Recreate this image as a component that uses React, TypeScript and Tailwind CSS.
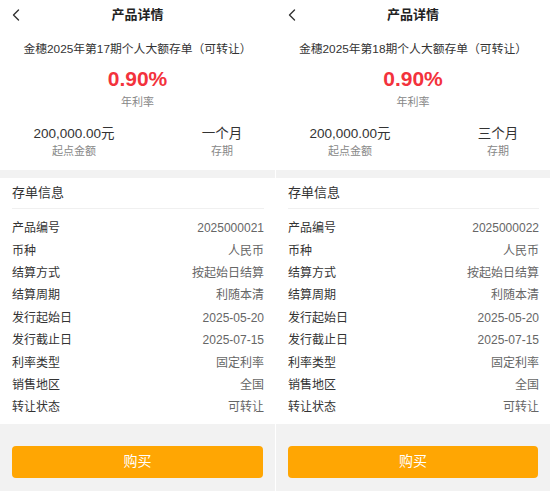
const FONT = "font-['Liberation_Sans','Noto_Sans_CJK_SC',sans-serif]";

interface Deposit {
  name: string;
  term: string;
  code: string;
}

const deposits: Deposit[] = [
  { name: "金穗2025年第17期个人大额存单（可转让）", term: "一个月", code: "2025000021" },
  { name: "金穗2025年第18期个人大额存单（可转让）", term: "三个月", code: "2025000022" },
];

function BackIcon() {
  return (
    <svg width="10" height="14" viewBox="0 0 10 14" fill="none" className="ml-3">
      <polyline points="6.5,2 1.5,7 6.5,12" stroke="#333" strokeWidth="1.4" strokeLinecap="round" strokeLinejoin="round" />
    </svg>
  );
}

function InfoRow({ label, value }: { label: string; value: string }) {
  return (
    <div className="flex h-[22.4px] items-center justify-between">
      <span className="text-[12px] text-[#333]">{label}</span>
      <span className="text-[12px] text-[#666]">{value}</span>
    </div>
  );
}

function DetailPanel({ deposit }: { deposit: Deposit }) {
  const rows = [
    ["产品编号", deposit.code],
    ["币种", "人民币"],
    ["结算方式", "按起始日结算"],
    ["结算周期", "利随本清"],
    ["发行起始日", "2025-05-20"],
    ["发行截止日", "2025-07-15"],
    ["利率类型", "固定利率"],
    ["销售地区", "全国"],
    ["转让状态", "可转让"],
  ];

  return (
    <div className="flex h-full flex-col bg-[#f2f2f2]">
      {/* Summary */}
      <div className="bg-white pb-[11px]">
        <div className="relative flex h-[30px] items-center">
          <BackIcon />
          <span className="absolute inset-x-0 text-center text-[13px] font-bold text-[#222]">产品详情</span>
        </div>
        <div className="mt-[10px] flex h-[20px] items-center justify-center whitespace-nowrap text-[11.8px] text-[#333]">
          {deposit.name}
        </div>
        <div className="mt-[5px] flex h-[28px] items-center justify-center text-[21px] font-bold text-[#f3323c]">
          0.90%
        </div>
        <div className="mt-[1px] flex h-[16px] items-center justify-center text-[11px] text-[#888]">年利率</div>
        <div className="mt-[15px] flex">
          <div className="flex w-[148px] shrink-0 flex-col items-center">
            <span className="flex h-[18px] items-center text-[13.5px] text-[#333]">200,000.00元</span>
            <span className="flex h-[16px] items-center text-[11px] text-[#888]">起点金额</span>
          </div>
          <div className="flex w-[148px] shrink-0 flex-col items-center">
            <span className="flex h-[18px] items-center text-[13.5px] text-[#333]">{deposit.term}</span>
            <span className="flex h-[16px] items-center text-[11px] text-[#888]">存期</span>
          </div>
        </div>
      </div>

      {/* Deposit info */}
      <div className="mt-[8px] bg-white pb-[5px] pl-3 pr-[11px]">
        <div className="flex h-[31px] items-center border-b border-[#f0f0f0] text-[13px] text-[#333]">存单信息</div>
        <div className="pt-[8px]">
          {rows.map(([label, value]) => (
            <InfoRow key={label} label={label} value={value} />
          ))}
        </div>
      </div>

      <div className="mx-3 mt-[22px] flex h-[32px] items-center justify-center rounded-[4px] bg-[#ffa603] text-[14px] text-white">
        购买
      </div>
    </div>
  );
}

export default function App() {
  return (
    <div className={`flex h-[491px] w-[550px] gap-[1px] overflow-hidden bg-white ${FONT}`}>
      <div className="w-[275px] min-w-0 shrink-0 overflow-hidden">
        <DetailPanel deposit={deposits[0]} />
      </div>
      <div className="w-[274px] min-w-0 shrink-0 overflow-hidden">
        <DetailPanel deposit={deposits[1]} />
      </div>
    </div>
  );
}
